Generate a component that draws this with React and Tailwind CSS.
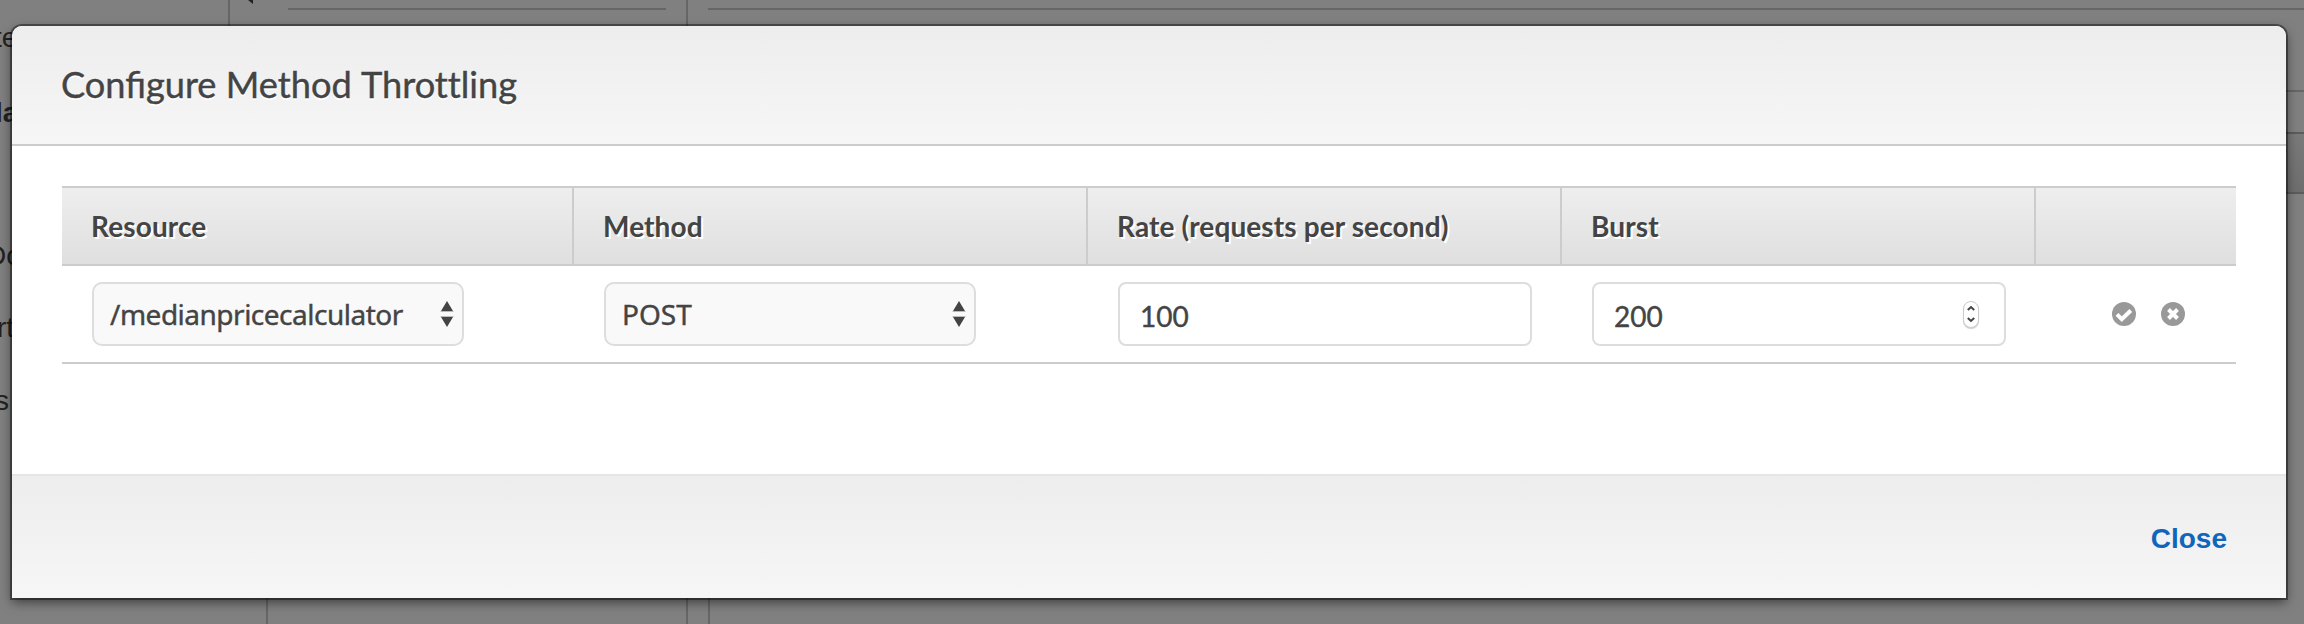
const headerText = "font-bold text-[28px] leading-[76px] tracking-[0.12px] text-[#444] [text-shadow:2px_2px_0_#fff] whitespace-nowrap";

function Arrows() {
  return (
    <svg width="14" height="26" viewBox="0 0 14 26" className="shrink-0" fill="#444">
      <path d="M7 0L13 10H1z" />
      <path d="M.5 10.5h13M.5 15.5h13" stroke="#bbb" strokeWidth="1" />
      <path d="M1 16h12L7 26z" />
    </svg>
  );
}

function Select({ children, textClass = "" }) {
  return (
    <div className="flex h-16 w-[372px] items-center justify-between rounded-[10px] border-2 border-[#ddd] bg-[#f9f9f9] pr-2 pl-4 font-['Noto_Sans',sans-serif] text-[28px] text-[#444] [-webkit-text-stroke:0.4px_#444]">
      <span className={"whitespace-nowrap " + textClass}>{children}</span>
      <Arrows />
    </div>
  );
}

function Field({ children, stepper }) {
  return (
    <div className="flex h-16 w-[414px] items-center justify-between rounded-[8px] border-2 border-[#ddd] bg-white pr-[25px] pl-5 text-[28px] text-[#444] [-webkit-text-stroke:0.4px_#444]">
      <span className="pt-1">{children}</span>
      {stepper && (
        <div className="flex h-[27px] w-4 items-center justify-center rounded-full border border-[#ccc] bg-white shadow-[0_1px_1px_rgba(0,0,0,0.2)]">
          <svg width="8" height="18" viewBox="0 0 8 18" fill="none" stroke="#444" strokeWidth="2">
            <path d="M.8 5l3.2-3 3.2 3M.8 13l3.2 3 3.2-3" />
          </svg>
        </div>
      )}
    </div>
  );
}

export default function App() {
  return (
    <div className="relative h-[624px] w-[2304px] overflow-hidden bg-[#808080] font-['Lato',sans-serif]">
      {/* page behind the dialog */}
      <svg className="absolute inset-0" width="2304" height="624">
        <defs>
          <linearGradient id="bar" x1="0" y1="0" x2="0" y2="1">
            <stop offset="0" stopColor="#7a7a7a" />
            <stop offset="1" stopColor="#6e6e6e" />
          </linearGradient>
        </defs>
        <rect x="2280" y="134" width="24" height="58" fill="url(#bar)" />
        <g fill="#666">
          <rect x="228" y="0" width="2" height="40" />
          <rect x="686" y="0" width="2" height="40" />
          <rect x="288" y="8" width="378" height="2" />
          <rect x="708" y="8" width="1596" height="2" />
          <rect x="266" y="590" width="2" height="34" />
          <rect x="686" y="590" width="2" height="34" />
          <rect x="708" y="590" width="2" height="34" />
          <rect x="2280" y="90" width="24" height="2" />
          <rect x="2280" y="132" width="24" height="2" fill="#5c5c5c" />
          <rect x="2280" y="192" width="24" height="2" fill="#5c5c5c" />
        </g>
        <path d="M248 0h5v4z" fill="#222" />
        <g fill="#222" fontFamily="Liberation Sans" fontSize="28">
          <text x="-6" y="47">te</text>
          <text x="-5" y="122" fontWeight="700">la</text>
          <text x="-14" y="265">Do</text>
          <text x="-3" y="337">rt</text>
          <text x="-5" y="410">s</text>
        </g>
      </svg>

      <div className="relative pt-[26px] pl-3">
        <div className="h-[572px] w-[2274px] rounded-t-[10px] shadow-[0_0_0_2px_rgba(0,0,0,0.4),0_4px_12px_rgba(0,0,0,0.55)]">
          <div className="flex h-full flex-col overflow-hidden rounded-t-[10px] bg-white">
            <header className="h-[120px] border-b-2 border-[#ccc] bg-linear-to-b from-[#ededed] to-[#f6f6f6] pl-[49px]">
              <h1 className="text-[36.2px] leading-[117px] text-[#444] [-webkit-text-stroke:0.4px_#444] [text-shadow:0_2px_0_#fff]">
                Configure Method <span className="[font-variant-ligatures:none]">Throttling</span>
              </h1>
            </header>

            <main className="grow px-[50px] pt-10">
              <div className="grid grid-cols-[512px_514px_474px_474px_200px] border-y-2 border-[#ccc] bg-linear-to-b from-[#eee] to-[#dfdfdf]">
                <div className={"border-r-2 border-[#ccc] pl-[29px] " + headerText}>Resource</div>
                <div className={"border-r-2 border-[#ccc] pl-[29px] " + headerText}>Method</div>
                <div className={"border-r-2 border-[#ccc] pl-[29px] " + headerText}>Rate (requests per second)</div>
                <div className={"border-r-2 border-[#ccc] pl-[29px] " + headerText}>Burst</div>
                <div />
              </div>
              <div className="grid h-[98px] grid-cols-[512px_514px_474px_474px_200px] items-center border-b-2 border-[#ccc]">
                <div className="pl-[30px]"><Select textClass="tracking-[-0.5px]">/medianpricecalculator</Select></div>
                <div className="pl-[30px]"><Select>POST</Select></div>
                <div className="pl-[30px]"><Field>100</Field></div>
                <div className="pl-[30px]"><Field stepper>200</Field></div>
                <div className="flex gap-[25px] pl-[76px]">
                  <svg width="24" height="24" viewBox="0 0 24 24">
                    <circle cx="12" cy="12" r="12" fill="#999" />
                    <path d="M5 12.3l4.8 4.8 9-8.6" fill="none" stroke="#fff" strokeWidth="4" />
                  </svg>
                  <svg width="24" height="24" viewBox="0 0 24 24">
                    <circle cx="12" cy="12" r="12" fill="#999" />
                    <path d="M7.5 7.5l9 9M16.5 7.5l-9 9" fill="none" stroke="#fff" strokeWidth="4" />
                  </svg>
                </div>
              </div>
            </main>

            <footer className="flex h-[124px] items-center justify-end border-t-2 border-[#e5e5e5] bg-linear-to-b from-[#ededed] to-[#f6f6f6] pt-[3px] pr-[59px]">
              <button className="font-['Liberation_Sans',sans-serif] text-[28px] font-bold text-[#1166bb]">Close</button>
            </footer>
          </div>
        </div>
      </div>
    </div>
  );
}
